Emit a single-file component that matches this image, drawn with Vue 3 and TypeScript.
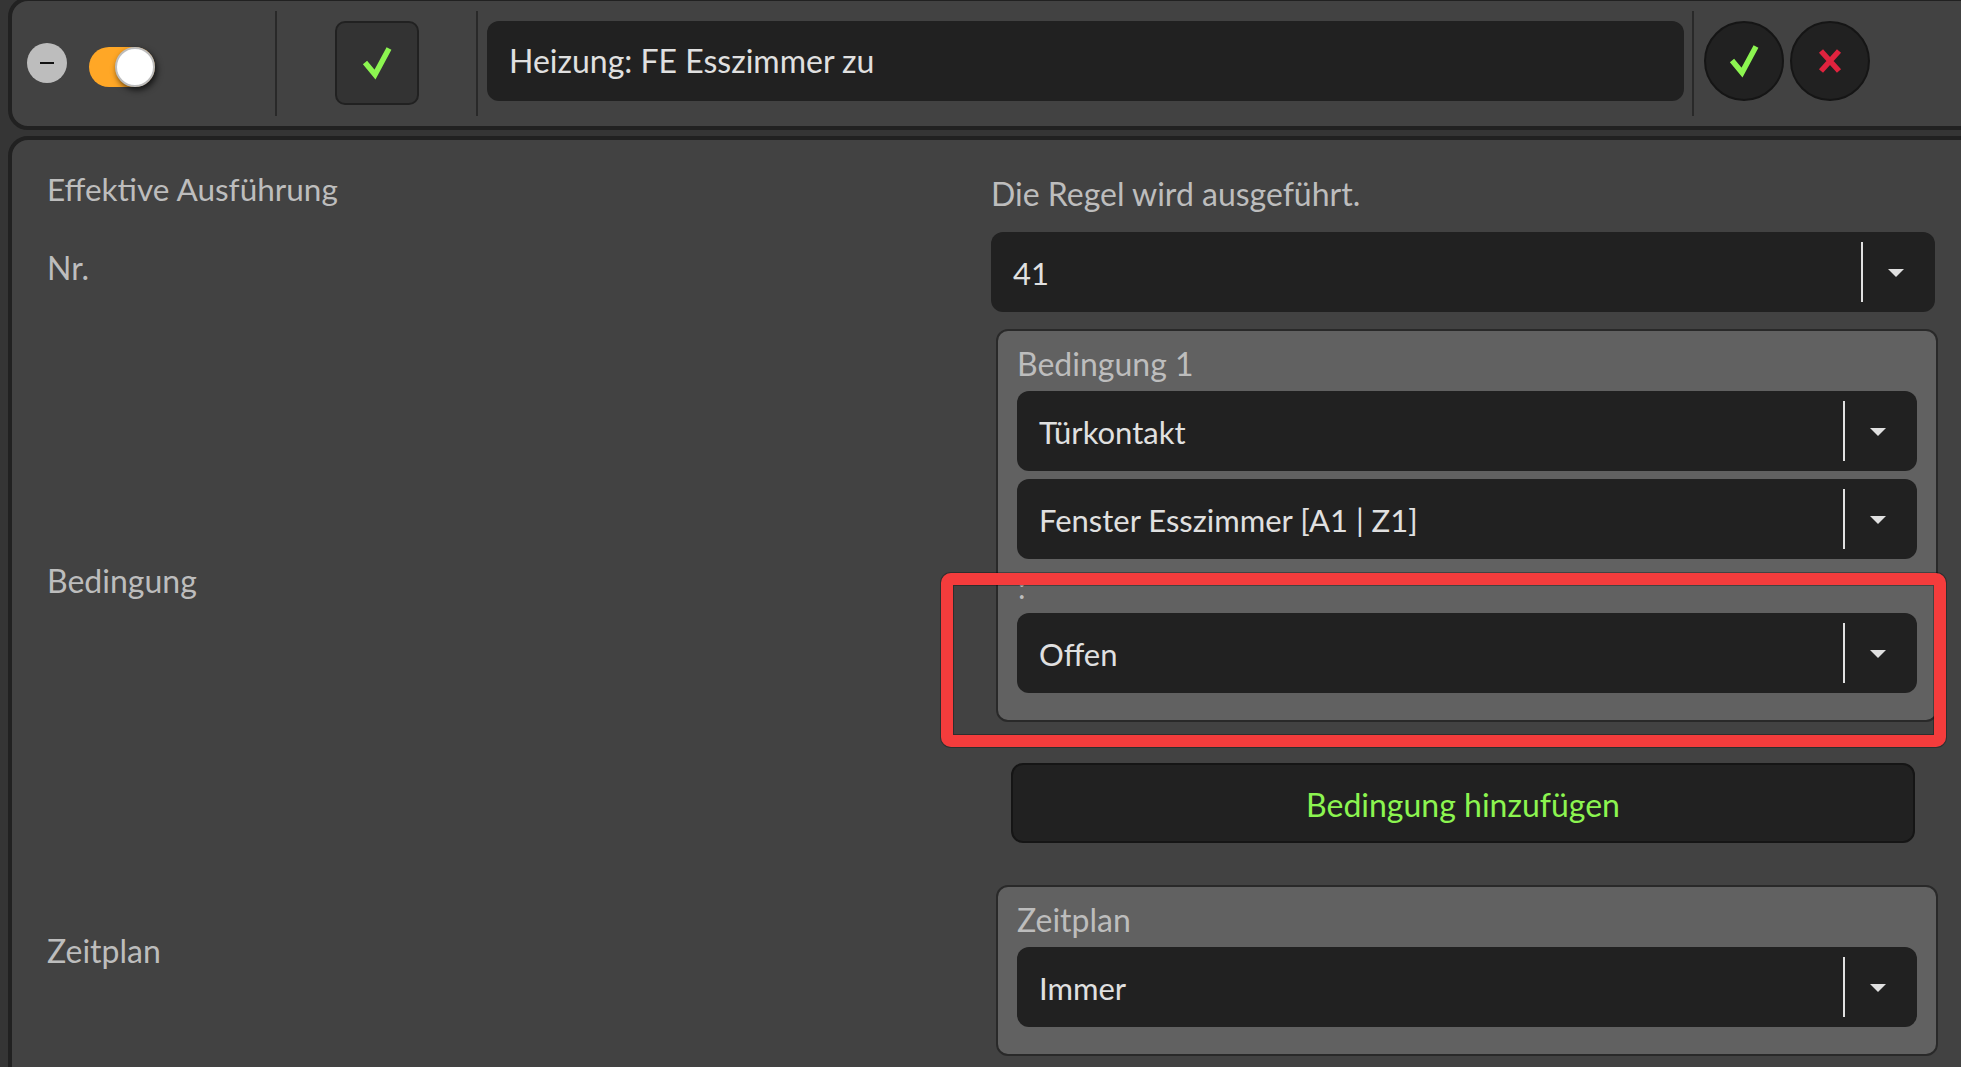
<script setup lang="ts">
const conditionSelects: string[] = ['Türkontakt', 'Fenster Esszimmer [A1 | Z1]']
</script>

<template>
  <div class="page">
    <header class="toolbar">
      <button class="minus" aria-label="Entfernen"><span></span></button>
      <div class="toggle"><span class="knob"></span></div>
      <i class="divider first"></i>
      <button class="square" aria-label="Aktiv">
        <svg width="36" height="36" viewBox="0 0 36 36"><path d="M6 17.5 L16 29.5 L30 3.5" class="ok" /></svg>
      </button>
      <i class="divider second"></i>
      <div class="name">Heizung: FE Esszimmer zu</div>
      <i class="divider third"></i>
      <button class="round save" aria-label="Speichern">
        <svg width="36" height="36" viewBox="0 0 36 36"><path d="M6 17.5 L16 29.5 L30 3.5" class="ok" /></svg>
      </button>
      <button class="round cancel" aria-label="Abbrechen">
        <svg width="30" height="30" viewBox="0 0 30 30"><path d="M6 5 L24 25 M24 5 L6 25" class="no" /></svg>
      </button>
    </header>

    <main class="panel">
      <div class="labels">
        <div class="label l-exec">Effektive Ausführung</div>
        <div class="label l-nr">Nr.</div>
        <div class="label l-cond">Bedingung</div>
        <div class="label l-plan">Zeitplan</div>
      </div>
      <div class="fields">
        <div class="status">Die Regel wird ausgeführt.</div>
        <div class="select"><span class="value">41</span><i class="sep"></i><i class="caret"></i></div>

        <div class="conditions">
          <section class="card">
            <div class="card-title">Bedingung 1</div>
            <div v-for="s in conditionSelects" :key="s" class="select stacked">
              <span class="value">{{ s }}</span><i class="sep"></i><i class="caret"></i>
            </div>
            <div class="colon">:</div>
            <div class="select"><span class="value">Offen</span><i class="sep"></i><i class="caret"></i></div>
          </section>
          <div class="highlight"></div>
        </div>

        <button class="add">Bedingung hinzufügen</button>

        <section class="card plan">
          <div class="card-title">Zeitplan</div>
          <div class="select"><span class="value">Immer</span><i class="sep"></i><i class="caret"></i></div>
        </section>
      </div>
    </main>
  </div>
</template>

<style>
html, body { margin: 0; background: #333; overflow: hidden; }
</style>

<style scoped>
.page {
  width: 1961px;
  height: 1067px;
  overflow: hidden;
  background: #353535;
  padding-left: 8px;
  box-sizing: border-box;
  font-family: Lato, "Liberation Sans", sans-serif;
}
button { padding: 0; font-family: inherit; }
.toolbar {
  width: 2000px;
  height: 133px;
  margin-top: -3px;
  box-sizing: border-box;
  border: 4px solid #212121;
  border-radius: 20px;
  background: #424242;
  display: flex;
  align-items: flex-start;
}
.minus {
  width: 40px; height: 40px;
  margin: 42px 0 0 15px;
  border: 0; border-radius: 50%;
  background: #bdbdbd;
  display: flex; align-items: center; justify-content: center;
}
.minus span { width: 14px; height: 2px; background: #111; }
.toggle {
  width: 66px; height: 40px;
  margin: 46px 0 0 22px;
  border-radius: 20px;
  background: #ffa726;
  position: relative;
}
.knob {
  position: absolute; right: 0; top: 0;
  width: 40px; height: 40px;
  box-sizing: border-box;
  border-radius: 50%;
  border: 2px solid #bdbdbd;
  background: #fff;
  box-shadow: 2px 3px 6px rgba(0,0,0,.7);
}
.divider { display: block; flex: none; width: 2px; height: 105px; margin-top: 10px; background: #292929; }
.divider.first { margin-left: 120px; }
.divider.second { margin-left: 57px; }
.divider.third { margin-left: 8px; }
.square {
  width: 84px; height: 84px;
  margin: 20px 0 0 58px;
  box-sizing: border-box;
  border: 2px solid #212121; border-radius: 10px;
  background: #333;
  display: flex; align-items: center; justify-content: center;
}
.name {
  width: 1197px; height: 80px;
  margin: 20px 0 0 9px;
  box-sizing: border-box;
  padding: 0 22px;
  border-radius: 12px;
  background: #212121;
  color: #e0e0e0;
  font-size: 32px;
  line-height: 80px;
}
.round {
  width: 80px; height: 80px;
  margin: 20px 0 0 6px;
  box-sizing: border-box;
  border: 2px solid #151515; border-radius: 50%;
  background: #212121;
  display: flex; align-items: center; justify-content: center;
}
.round.save { margin-left: 10px; }
.ok { fill: none; stroke: #8cf550; stroke-width: 5.5; }
.no { fill: none; stroke: #e0233e; stroke-width: 5.5; }

.panel {
  width: 2000px;
  height: 1000px;
  margin-top: 6px;
  box-sizing: border-box;
  border: 4px solid #212121;
  border-radius: 20px;
  background: #424242;
  display: flex;
}
.labels { width: 979px; flex: none; padding-left: 35px; box-sizing: border-box; }
.label { color: #bdbdbd; font-size: 32px; line-height: 40px; }
.l-exec { margin-top: 29px; font-size: 31.5px; }
.l-nr { margin-top: 39px; }
.l-cond { margin-top: 273px; }
.l-plan { margin-top: 330px; }
.fields { width: 944px; flex: none; }
.status { color: #bdbdbd; font-size: 32px; line-height: 40px; margin-top: 34px; margin-bottom: 18px; }
.select {
  height: 80px;
  border-radius: 12px;
  background: #212121;
  color: #e0e0e0;
  display: flex;
  align-items: center;
  font-size: 31px;
  position: relative;
}
.select.stacked { margin-bottom: 8px; }
.value { flex: 1; padding: 2px 0 0 22px; }
.sep { width: 2px; height: 60px; background: #e0e0e0; }
.caret {
  width: 0; height: 0;
  margin: 2px 31px 0 25px;
  border-left: 8px solid transparent;
  border-right: 8px solid transparent;
  border-top: 8px solid #e0e0e0;
}
.conditions { position: relative; margin-top: 17px; }
.card {
  margin: 0 -3px 0 5px;
  box-sizing: border-box;
  border: 2px solid #292929;
  border-radius: 12px;
  background: #616161;
  padding: 0 19px 27px;
}
.card-title { height: 60px; color: #bdbdbd; font-size: 32px; line-height: 60px; padding-top: 3px; box-sizing: border-box; }
.colon { height: 38px; color: #bdbdbd; font-size: 30px; line-height: 40px; margin-bottom: 8px; padding-left: 1px; }
.highlight {
  position: absolute;
  left: -50px; top: 244px;
  width: 1005px; height: 174px;
  box-sizing: border-box;
  border: 12px solid #f43c3c;
  border-radius: 10px;
  box-shadow: 0 0 0 1px rgba(0,0,0,.3), inset 0 0 0 1px rgba(0,0,0,.3);
}
.add {
  display: block;
  width: 904px; height: 80px;
  margin: 41px 0 42px 20px;
  box-sizing: border-box;
  border: 2px solid #151515;
  border-radius: 12px;
  background: #212121;
  color: #8cf550;
  font-size: 32px;
  padding-top: 3px;
}
</style>
